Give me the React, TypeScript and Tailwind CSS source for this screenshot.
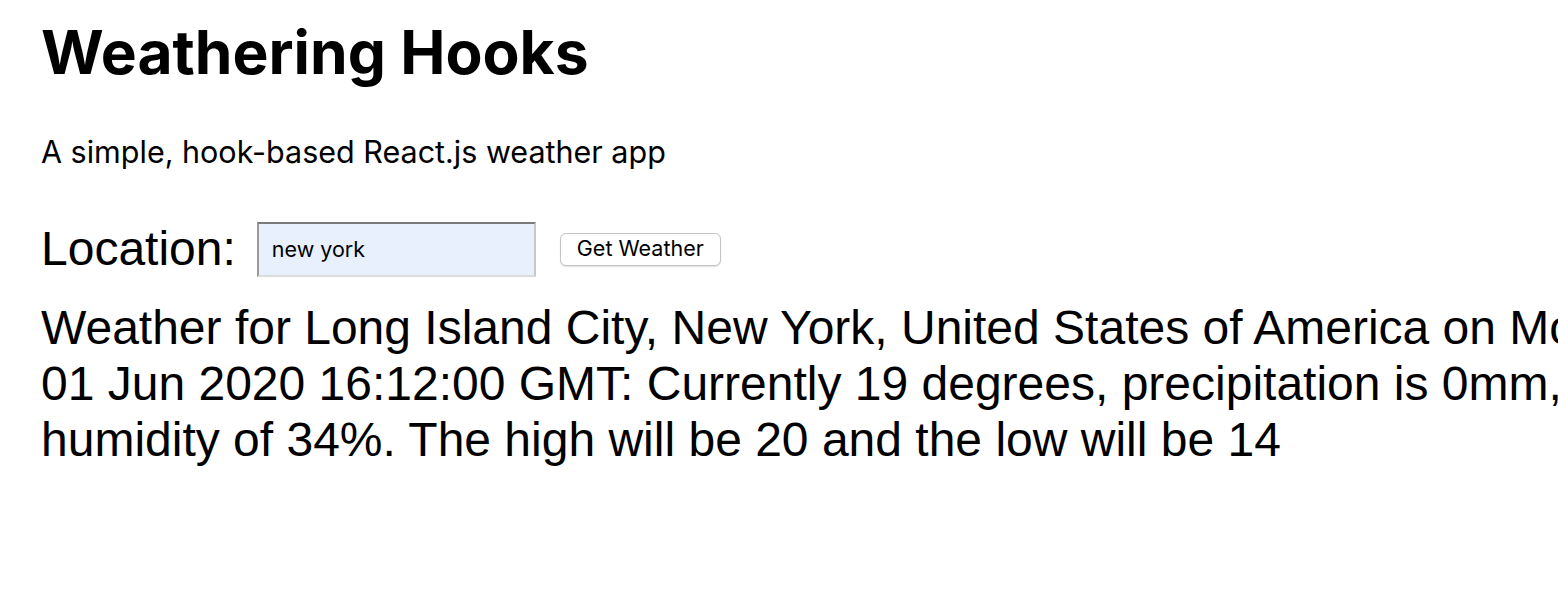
import React, { useState } from "react";

export default function App() {
  const [location, setLocation] = useState("new york");

  return (
    <div className="h-[598px] w-full overflow-hidden bg-white text-black">
      <div className="w-[1700px] pl-[41px]">
        <h1 className="pt-[14px] font-['Inter',sans-serif] text-[60.5px] font-bold leading-[76px]">
          Weathering Hooks
        </h1>

        <p className="mt-[43px] font-['Inter',sans-serif] text-[30.5px] leading-[38px]">
          A simple, hook-based React.js weather app
        </p>

        <form
          onSubmit={(e) => e.preventDefault()}
          className="mt-[50px] flex items-center"
        >
          <label
            htmlFor="location"
            className="font-['Liberation_Sans',Arial,sans-serif] text-[48px] leading-[56px]"
          >
            Location:
          </label>
          <input
            id="location"
            value={location}
            onChange={(e) => setLocation(e.target.value)}
            className="ml-[21px] h-[55px] w-[279px] border-2 border-t-[#7a7a7a] border-l-[#9a9a9a] border-r-[#c8c8c8] border-b-[#dcdcdc] bg-[#e8f0fe] px-[13px] font-['Inter',sans-serif] text-[21.5px] text-black outline-none"
          />
          <button
            type="submit"
            className="ml-[24px] h-[33px] w-[161px] rounded-[6px] border border-[#c4c4c4] bg-white font-['Inter',sans-serif] text-[21.5px] leading-none text-black shadow-[0_1px_1px_rgba(0,0,0,0.12)]"
          >
            Get Weather
          </button>
        </form>

        {/* report text runs past the right edge, as in the original */}
        <p className="mt-[23px] w-[1660px] font-['Liberation_Sans',Arial,sans-serif] text-[48px] leading-[56px]">
          Weather for Long Island City, New York, United States of America on Mon,
          <br />
          01 Jun 2020 16:12:00 GMT: Currently 19 degrees, precipitation is 0mm, with a
          humidity of 34%. The high will be 20 and the low will be 14
        </p>
      </div>
    </div>
  );
}
